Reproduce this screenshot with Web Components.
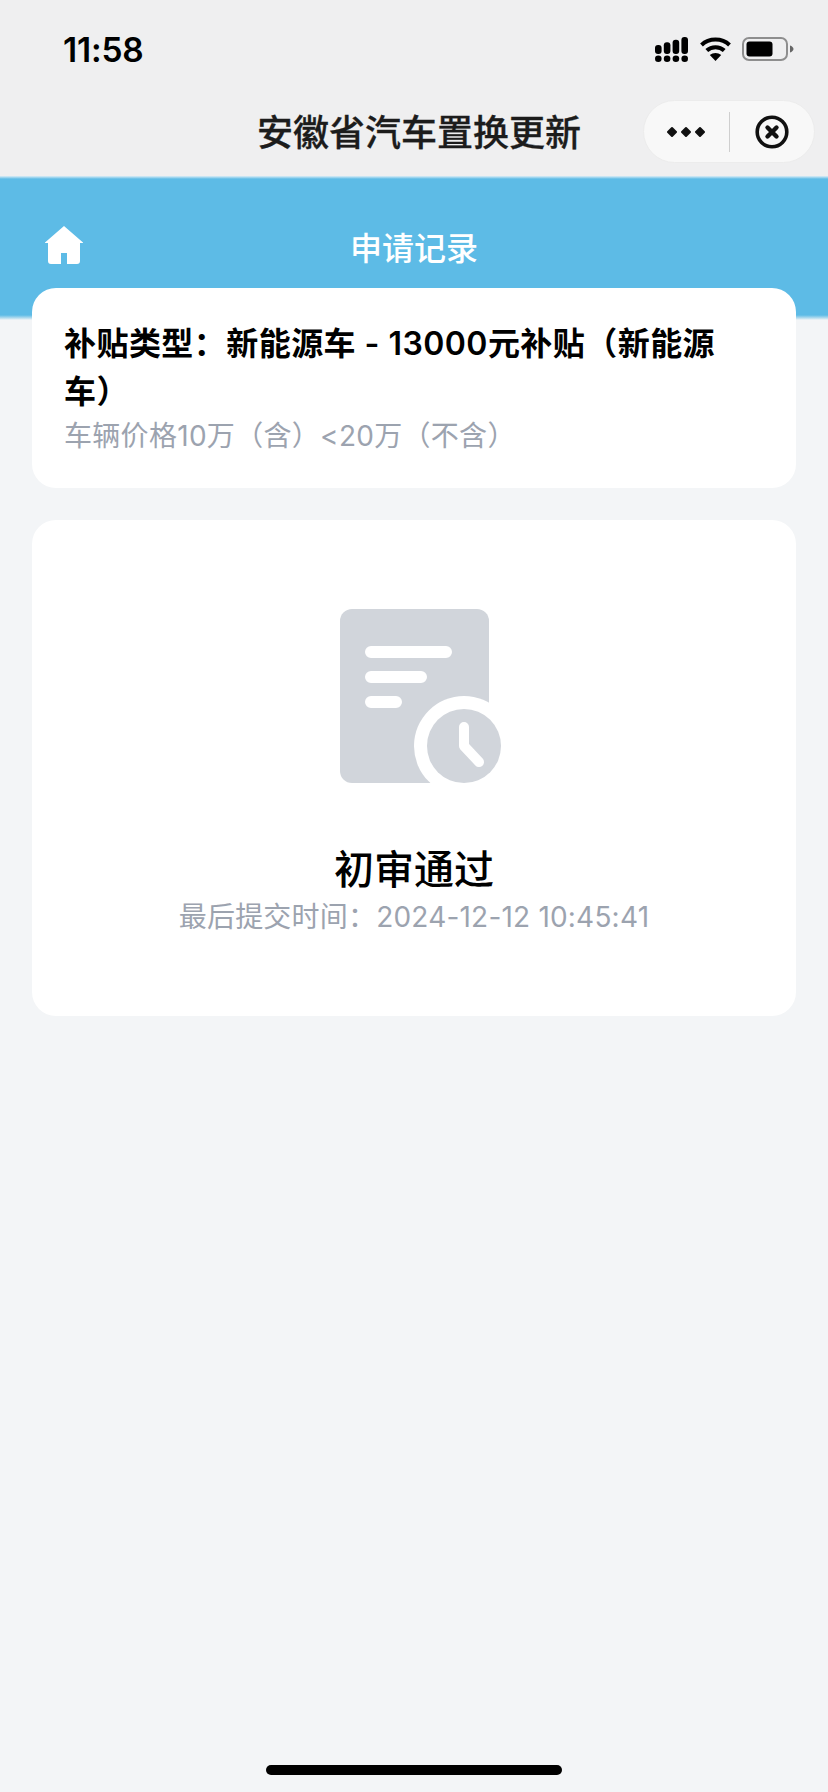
<!DOCTYPE html>
<html lang="zh">
<head>
<meta charset="utf-8">
<title>安徽省汽车置换更新</title>
<style>
  html, body { margin: 0; padding: 0; }
  body {
    width: 828px;
    height: 1792px;
    overflow: hidden;
    background: #f3f5f7;
    font-family: Inter, "Noto Sans CJK SC", sans-serif;
  }
</style>
</head>
<body>
<app-nav title-text="安徽省汽车置换更新"></app-nav>
<page-banner title-text="申请记录"></page-banner>
<page-content>
  <info-card>
    <div slot="title">补贴类型：新能源车 - 13000元补贴（新能源车）</div>
    <div slot="desc">车辆价格10万（含）&lt;20万（不含）</div>
  </info-card>
  <status-card label="初审通过" time="最后提交时间：2024-12-12 10:45:41"></status-card>
</page-content>
<home-bar></home-bar>

<script>
const navTemplate = document.createElement('template')
navTemplate.innerHTML = `
  <style>
    :host { display: block; height: 176px; background: #efeff0; color: #000; }
    .status {
      height: 88px;
      display: flex;
      justify-content: space-between;
      align-items: center;
      padding: 0 34px 0 63px;
      box-sizing: border-box;
    }
    .time { font: 600 33.5px Inter, sans-serif; letter-spacing: -.2px; position: relative; top: 6px; }
    .icons { display: flex; align-items: center; position: relative; top: 5px; }
    .icons svg + svg { margin-left: 12px; }
    svg { display: block; }
    .bar {
      height: 88px;
      display: flex;
      align-items: center;
      justify-content: center;
      position: relative;
      padding: 0 0 4px 10px;
      box-sizing: border-box;
    }
    h1 {
      margin: 0;
      font: 500 36px "Noto Sans CJK SC", sans-serif;
      -webkit-text-stroke: .3px #1c1c1c;
      color: #1c1c1c;
      line-height: 48px;
    }
    .capsule {
      position: absolute;
      right: 13px;
      top: 12px;
      width: 172px;
      height: 63px;
      box-sizing: border-box;
      border-radius: 32px;
      background: #f8f8f8;
      border: 1px solid #ececec;
      display: flex;
      align-items: center;
    }
    .capsule > div { flex: 1; display: flex; justify-content: center; align-items: center; height: 40px; }
    .capsule > div + div { border-left: 1px solid #cfcfcf; }
  </style>
  <div class="status">
    <span class="time">11:58</span>
    <div class="icons">
      <svg width="33" height="25" viewBox="0 0 33 25" fill="#000">
        <circle cx="3.300" cy="21.700" r="3.300"/><circle cx="12.100" cy="21.700" r="3.300"/><circle cx="20.900" cy="21.700" r="3.300"/><circle cx="29.700" cy="21.700" r="3.300"/>
        <rect x="0" y="8" width="6.600" height="9" rx="3"/>
        <rect x="8.800" y="5.300" width="6.600" height="11.700" rx="3"/>
        <rect x="17.600" y="2.700" width="6.600" height="14.300" rx="3"/>
        <rect x="26.400" y="0" width="6.600" height="17" rx="3"/>
      </svg>
      <svg width="31" height="24" viewBox="0 0 31 24" fill="none" stroke="#000" stroke-width="4">
        <path d="M1.500 8C9 .8 22 .8 29.500 8"/>
        <path d="M6.800 13.500C11.500 9 19.500 9 24.200 13.500"/>
        <path d="M15.500 24L9.800 18C13 15.300 18 15.300 21.200 18Z" fill="#000" stroke="none"/>
      </svg>
      <svg width="52" height="24" viewBox="0 0 52 24" fill="none" style="margin-left:11px">
        <rect x="1" y="1" width="44" height="22" rx="6" stroke="#8e8e8e" stroke-width="2"/>
        <rect x="4.500" y="4.500" width="26" height="15" rx="3" fill="#000"/>
        <path d="M48 8.500c2 .6 3.500 2 3.500 3.500s-1.500 2.900-3.500 3.500z" fill="#666"/>
      </svg>
    </div>
  </div>
  <div class="bar">
    <h1></h1>
    <div class="capsule">
      <div>
        <svg width="38" height="12" viewBox="0 0 38 12" fill="#111" stroke="#111" stroke-width="2" stroke-linejoin="round">
          <path d="M5 2 9 6 5 10 1 6Z"/><path d="M19 2 23 6 19 10 15 6Z"/><path d="M33 2 37 6 33 10 29 6Z"/>
        </svg>
      </div>
      <div>
        <svg width="34" height="34" viewBox="0 0 34 34" fill="none" stroke="#111">
          <circle cx="17" cy="17" r="14.800" stroke-width="3.600"/>
          <path d="M12.500 12.500 21.500 21.500M21.500 12.500 12.500 21.500" stroke-width="4.400" stroke-linecap="round"/>
        </svg>
      </div>
    </div>
  </div>
`

class AppNav extends HTMLElement {
  constructor() {
    super()
    this.attachShadow({ mode: 'open' })
    this.shadowRoot.appendChild(navTemplate.content.cloneNode(true))
    this.shadowRoot.querySelector('h1').textContent = this.getAttribute('title-text')
  }
}
customElements.define('app-nav', AppNav)

const bannerTemplate = document.createElement('template')
bannerTemplate.innerHTML = `
  <style>
    :host {
      display: block;
      height: 144px;
      box-sizing: border-box;
      background: linear-gradient(#dcedf6 0, #5dbbe6 3px, #5dbbe6 139px, #b4dcee 142px, #f3f5f7 144px);
      padding-top: 46px;
      position: relative;
    }
    .row {
      height: 48px;
      display: flex;
      align-items: center;
      justify-content: center;
      position: relative;
    }
    svg { position: absolute; left: 45px; top: 4px; }
    span { font: 500 32px "Noto Sans CJK SC", sans-serif; color: #fff; }
  </style>
  <div class="row">
    <svg width="38" height="38" viewBox="0 0 38 38" fill="#fff">
      <path d="M19 0 38 16.500V17H35V35a3 3 0 0 1-3 3H22V27H16V38H6a3 3 0 0 1-3-3V17H0V16.500Z"/>
    </svg>
    <span></span>
  </div>
`

class PageBanner extends HTMLElement {
  constructor() {
    super()
    this.attachShadow({ mode: 'open' })
    this.shadowRoot.appendChild(bannerTemplate.content.cloneNode(true))
    this.shadowRoot.querySelector('span').textContent = this.getAttribute('title-text')
  }
}
customElements.define('page-banner', PageBanner)

class PageContent extends HTMLElement {
  constructor() {
    super()
    this.attachShadow({ mode: 'open' }).innerHTML = `
      <style>
        :host {
          display: flex;
          flex-direction: column;
          gap: 32px;
          margin-top: -32px;
          padding: 0 32px;
          position: relative;
        }
      </style>
      <slot></slot>
    `
  }
}
customElements.define('page-content', PageContent)

class InfoCard extends HTMLElement {
  constructor() {
    super()
    this.attachShadow({ mode: 'open' }).innerHTML = `
      <style>
        :host {
          display: block;
          background: #fff;
          border-radius: 24px;
          padding: 32px 32px 32px;
          font-family: Inter, "Noto Sans CJK SC", sans-serif;
          text-spacing-trim: space-all;
        }
        .title { font-size: 32px; font-weight: 600; line-height: 48px; color: #000; letter-spacing: .45px; }
        .desc { font-size: 28px; line-height: 40px; color: #9ca3af; letter-spacing: .3px; }
      </style>
      <div class="title"><slot name="title"></slot></div>
      <div class="desc"><slot name="desc"></slot></div>
    `
  }
}
customElements.define('info-card', InfoCard)

class StatusCard extends HTMLElement {
  constructor() {
    super()
    this.attachShadow({ mode: 'open' }).innerHTML = `
      <style>
        :host {
          display: flex;
          flex-direction: column;
          align-items: center;
          height: 496px;
          box-sizing: border-box;
          padding-top: 89px;
          background: #fff;
          border-radius: 24px;
          font-family: Inter, "Noto Sans CJK SC", sans-serif;
          text-spacing-trim: space-all;
        }
        svg { display: block; margin-left: 13px; }
        .label { margin-top: 59px; font-size: 40px; font-weight: 500; line-height: 55px; color: #000; }
        .time { font-size: 28px; line-height: 40px; color: #9ca3af; letter-spacing: .2px; }
      </style>
      <svg width="162" height="174" viewBox="0 0 162 174">
        <path fill="#d1d5db" d="M12 0H137A12 12 0 0 1 149 12V174H12A12 12 0 0 1 0 162V12A12 12 0 0 1 12 0Z"/>
        <circle cx="124" cy="137" r="50" fill="#fff"/>
        <rect x="100" y="174" width="62" height="14" fill="#fff"/>
        <circle cx="124" cy="137" r="37" fill="#d1d5db"/>
        <path d="M31 43H106M31 68H81M31 93H56" stroke="#fff" stroke-width="12" stroke-linecap="round"/>
        <path d="M124 118V137L139 153" fill="none" stroke="#fff" stroke-width="10" stroke-linecap="round" stroke-linejoin="round"/>
      </svg>
      <div class="label"></div>
      <div class="time"></div>
    `
    this.shadowRoot.querySelector('.label').textContent = this.getAttribute('label')
    this.shadowRoot.querySelector('.time').textContent = this.getAttribute('time')
  }
}
customElements.define('status-card', StatusCard)

class HomeBar extends HTMLElement {
  constructor() {
    super()
    this.attachShadow({ mode: 'open' }).innerHTML = `
      <style>
        :host {
          position: absolute;
          left: 266px;
          top: 1765px;
          width: 296px;
          height: 10px;
          border-radius: 5px;
          background: #000;
        }
      </style>
    `
  }
}
customElements.define('home-bar', HomeBar)
</script>
</body>
</html>
